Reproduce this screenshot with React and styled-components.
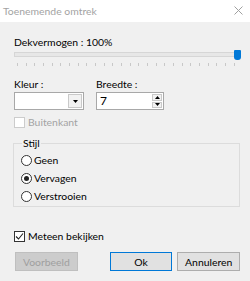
import React from "react";
import styled, { createGlobalStyle } from "styled-components";

const Global = createGlobalStyle`
  html, body { margin: 0; padding: 0; background: #f0f0f0; }
  body { font-family: Lato, "Noto Sans", sans-serif; font-size: 10.4px; color: #000; }
  * { box-sizing: border-box; }
`;

const Window = styled.div`
  width: 250px;
  height: 281px;
  background: #f0f0f0;
  display: flex;
  flex-direction: column;
  overflow: hidden;
`;

const TitleBar = styled.div`
  height: 22px;
  flex: none;
  background: #fff;
  display: flex;
  align-items: center;
  justify-content: space-between;
  padding: 0 7px 1px 3px;
  color: #a3a3a3;
  font-size: 10.4px;
`;

const Body = styled.div`
  padding: 13px 10px 0 14px;
  display: flex;
  flex-direction: column;
`;

const Label = styled.div`
  line-height: 14px;
  height: 14px;
  white-space: nowrap;
  color: ${(p) => (p.$disabled ? "#a3a3a3" : "#000")};
`;

const SliderWrap = styled.div`
  position: relative;
  margin-top: 3px;
  width: 224px;
  height: 15px;
`;

const Track = styled.div`
  position: absolute;
  left: 0;
  right: 1px;
  top: 0;
  height: 5px;
  background: #e7e7e7;
  border: 1px solid #d6d6d6;
`;

const Thumb = styled.div`
  position: absolute;
  left: 220px;
  top: -2px;
  width: 7px;
  height: 10px;
  background: #0078d7;
  border-radius: 1px 1px 3px 3px;
`;

const Ticks = styled.div`
  position: absolute;
  left: 3px;
  right: 3px;
  top: 11px;
  display: flex;
  justify-content: space-between;
`;

const Tick = styled.span`
  width: 1px;
  height: 3px;
  background: #c8c8c8;
`;

const FieldRow = styled.div`
  display: flex;
  gap: 12px;
  margin-top: 10px;
`;

const Field = styled.div`
  display: flex;
  flex-direction: column;
  gap: 1px;
`;

const InputBox = styled.div`
  width: ${(p) => p.$w}px;
  height: 18px;
  background: #fff;
  border: 1px solid #a8a8a8;
  display: flex;
  align-items: stretch;
`;

const InputText = styled.div`
  flex: 1;
  padding-left: 3px;
  line-height: 16px;
  font-size: 12px;
`;

const DropBtn = styled.div`
  width: 14px;
  margin: 1px;
  background: #f2f2f2;
  border: 1px solid #c9c9c9;
  display: flex;
  align-items: center;
  justify-content: center;
`;

const SpinCol = styled.div`
  width: 10px;
  margin: 1px;
  display: flex;
  flex-direction: column;
  gap: 1px;
`;

const SpinBtn = styled.div`
  flex: 1;
  background: #f2f2f2;
  border: 1px solid #c9c9c9;
  display: flex;
  align-items: center;
  justify-content: center;
`;

const CheckRow = styled.div`
  display: flex;
  align-items: center;
  gap: 3px;
  height: 16px;
  margin-top: ${(p) => p.$mt}px;
`;

const Box = styled.div`
  width: 11px;
  height: 11px;
  background: #fff;
  border: 1px solid ${(p) => (p.$disabled ? "#cccccc" : "#333")};
  display: flex;
  align-items: center;
  justify-content: center;
`;

const Group = styled.fieldset`
  margin: 6px 0 0 -1px;
  width: 227px;
  border: 1px solid #dcdcdc;
  padding: 1px 0 1px 7px;
  display: flex;
  flex-direction: column;
`;

const Legend = styled.legend`
  padding: 0 1px;
  margin-left: 1px;
  line-height: 14px;
  height: 14px;
`;

const RadioRow = styled.div`
  display: flex;
  align-items: center;
  gap: 2px;
  height: 18px;
`;

const Radio = styled.div`
  width: 11px;
  height: 11px;
  border-radius: 50%;
  border: 1px solid #333;
  background: #fff;
  display: flex;
  align-items: center;
  justify-content: center;
  &::after {
    content: "";
    display: ${(p) => (p.$on ? "block" : "none")};
    width: 5px;
    height: 5px;
    border-radius: 50%;
    background: #222;
  }
`;

const ButtonRow = styled.div`
  display: flex;
  margin-top: 8px;
  padding-left: 1px;
`;

const Button = styled.div`
  width: 63px;
  height: 19px;
  display: flex;
  align-items: center;
  justify-content: center;
  background: ${(p) => (p.$disabled ? "#cccccc" : "#e1e1e1")};
  border: 1px solid ${(p) => (p.$disabled ? "#bfbfbf" : p.$default ? "#0078d7" : "#adadad")};
  color: ${(p) => (p.$disabled ? "#9f9f9f" : "#000")};
  margin-left: ${(p) => p.$ml || 0}px;
  white-space: nowrap;
`;

export default function App() {
  const ticks = Array.from({ length: 26 });
  return (
    <>
      <Global />
      <Window>
        <TitleBar>
          <span>Toenemende omtrek</span>
          <svg width="9" height="9" viewBox="0 0 9 9">
            <path d="M0.5 0.5 L8.5 8.5 M8.5 0.5 L0.5 8.5" stroke="#a0a0a0" strokeWidth="1" />
          </svg>
        </TitleBar>
        <Body>
          <Label>Dekvermogen : 100%</Label>
          <SliderWrap>
            <Track />
            <Ticks>
              {ticks.map((_, i) => (
                <Tick key={i} />
              ))}
            </Ticks>
            <Thumb />
          </SliderWrap>
          <FieldRow>
            <Field>
              <Label>Kleur :</Label>
              <InputBox $w={70}>
                <InputText />
                <DropBtn>
                  <svg width="5" height="3" viewBox="0 0 5 3">
                    <path d="M0 0 H5 L2.5 3 Z" fill="#000" />
                  </svg>
                </DropBtn>
              </InputBox>
            </Field>
            <Field>
              <Label>Breedte :</Label>
              <InputBox $w={68}>
                <InputText>7</InputText>
                <SpinCol>
                  <SpinBtn>
                    <svg width="5" height="3" viewBox="0 0 5 3">
                      <path d="M0 3 H5 L2.5 0 Z" fill="#000" />
                    </svg>
                  </SpinBtn>
                  <SpinBtn>
                    <svg width="5" height="3" viewBox="0 0 5 3">
                      <path d="M0 0 H5 L2.5 3 Z" fill="#000" />
                    </svg>
                  </SpinBtn>
                </SpinCol>
              </InputBox>
            </Field>
          </FieldRow>
          <CheckRow $mt={4}>
            <Box $disabled />
            <Label $disabled>Buitenkant</Label>
          </CheckRow>
          <Group>
            <Legend>Stijl</Legend>
            <RadioRow>
              <Radio />
              <Label>Geen</Label>
            </RadioRow>
            <RadioRow>
              <Radio $on />
              <Label>Vervagen</Label>
            </RadioRow>
            <RadioRow>
              <Radio />
              <Label>Verstrooien</Label>
            </RadioRow>
          </Group>
          <CheckRow $mt={21}>
            <Box>
              <svg width="9" height="9" viewBox="0 0 9 9">
                <path d="M1 4.5 L3.5 7 L8 1.5" stroke="#222" strokeWidth="1.1" fill="none" />
              </svg>
            </Box>
            <Label>Meteen bekijken</Label>
          </CheckRow>
          <ButtonRow>
            <Button $disabled>Voorbeeld</Button>
            <Button $default $ml={32}>Ok</Button>
            <Button $ml={5}>Annuleren</Button>
          </ButtonRow>
        </Body>
      </Window>
    </>
  );
}
